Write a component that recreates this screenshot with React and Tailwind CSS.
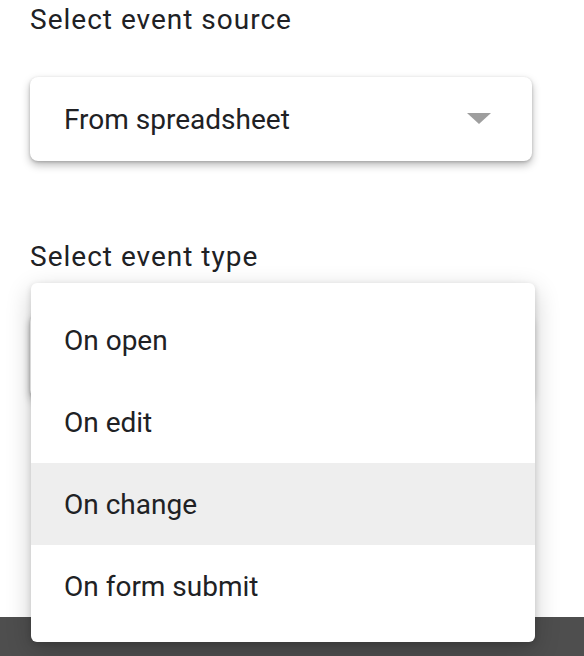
import React from 'react';

const eventTypes = ['On open', 'On edit', 'On change', 'On form submit'];

const Caret = () => (
  <svg width="24" height="12" viewBox="0 0 24 12" className="shrink-0">
    <polygon points="0,0 24,0 12,11" fill="#9e9e9e" />
  </svg>
);

const SelectBox = ({ value }) => (
  <div className="flex h-[84px] w-[502px] items-center justify-between rounded-lg bg-white pl-[34px] pr-[41px] shadow-[0_1px_3px_rgba(0,0,0,0.18),0_4px_9px_rgba(0,0,0,0.28)]">
    <span className="pt-[2px]">{value}</span>
    <Caret />
  </div>
);

export default function App() {
  return (
    <div className="relative flex h-[656px] w-[584px] flex-col overflow-hidden bg-white font-['Roboto',sans-serif] text-[28px] leading-[36px] text-[#202124]">
      <div className="px-[30px] pt-[2px]">
        <div className="tracking-[1px]">Select event source</div>
        <div className="mt-[39px]">
          <SelectBox value="From spreadsheet" />
        </div>
        <div className="mt-[78px] tracking-[1px]">Select event type</div>
        <div className="mt-[39px]">
          {/* hidden under the open menu */}
          <SelectBox value="" />
        </div>
      </div>

      <div className="mt-auto h-[39px] bg-[#4e4e4e]" />

      {/* open dropdown menu */}
      <ul className="absolute left-[31px] top-[283px] w-[504px] rounded-md bg-white pt-[16px] pb-[15px] shadow-[0_2px_6px_rgba(0,0,0,0.15),0_8px_26px_rgba(0,0,0,0.2)]">
        {eventTypes.map((type) => (
          <li
            key={type}
            className={`flex h-[82px] items-center pl-[33px] pt-[2px] ${type === 'On change' ? 'bg-[#eeeeee]' : ''}`}
          >
            {type}
          </li>
        ))}
      </ul>
    </div>
  );
}
